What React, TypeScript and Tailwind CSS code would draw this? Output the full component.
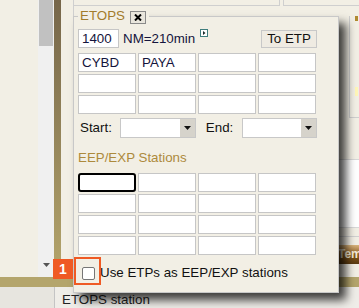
import React from 'react'

function Cell({ text, focus }: { text?: string; focus?: boolean }) {
    return (
        <div
            className={
                focus
                    ? 'h-[19px] bg-white border-2 border-black rounded-[3px]'
                    : 'h-[19px] bg-white border border-[#c6c6c6] pl-[3px] flex items-center text-[#14143c]'
            }
        >
            {text}
        </div>
    )
}

function Select({ className }: { className: string }) {
    return (
        <div className={'flex h-[20px] bg-white border border-[#c8c8c8] ' + className}>
            <div className="flex-1" />
            <div className="w-[15px] bg-[#d6d3cb] flex items-center justify-center">
                <svg width="7" height="4" viewBox="0 0 7 4">
                    <path d="M0 0 H7 L3.5 4 Z" fill="#111" />
                </svg>
            </div>
        </div>
    )
}

export default function App() {
    const grid1 = [
        ['CYBD', 'PAYA', '', ''],
        ['', '', '', ''],
        ['', '', '', ''],
    ]
    const grid2 = [0, 1, 2, 3]

    return (
        <div className="relative w-[359px] h-[308px] overflow-hidden bg-[#f2efe5] font-['Liberation_Sans',Arial,sans-serif] text-[13.33px] leading-[16px] text-[#111]">
            {/* page behind the popup */}
            <div className="flex flex-col h-full">
                <div className="flex h-[280px]">
                    <div className="w-[38px] bg-[#f2efe5]" />
                    <div className="w-[16px] bg-[#f0f0f0] flex flex-col">
                        <div className="h-[46px] mx-[1px] bg-[#c1c1c1]" />
                        <div className="flex-1" />
                        <div className="h-[16px] flex justify-center pt-[2px]">
                            <svg width="7" height="4" viewBox="0 0 7 4">
                                <path d="M0 0 H7 L3.5 4 Z" fill="#555" />
                            </svg>
                        </div>
                    </div>
                    <div className="w-[7px] bg-gradient-to-b from-[#76664a] to-[#b5a66c]" />
                    <div className="flex-1 flex flex-col pl-[12px]">
                        <div className="h-[6px] flex gap-[3px]">
                            <div className="w-[207px] border-x border-b border-[#cfcfcf]" />
                            <div className="flex-1 border-l border-b border-[#cfcfcf]" />
                        </div>
                        <div className="flex-1 flex">
                            <div className="flex-1 border-l border-[#cfcfcf]" />
                            <div className="w-[21px] flex flex-col">
                                <div className="h-[10px]" />
                                <div className="h-[102px] ml-[11px] border-l border-b border-[#cfcfcf] flex flex-col pl-[5px]">
                                    <div className="w-[3px] h-[5px] bg-[#b08a30]" />
                                    <div className="h-[66px]" />
                                    <div className="w-[3px] h-[9px] bg-[#fff6b8]" />
                                </div>
                                <div className="h-[41px]" />
                                <div className="h-[69px] bg-white border-y border-[#d8d8d8]" />
                                <div className="h-[9px] border-b border-[#d0d0d0]" />
                                <div className="h-[8px]" />
                                <div className="h-[19px] bg-gradient-to-b from-[#d9b47c] via-[#8a5c1e] to-[#5a3a10] text-[#f5ecd8] font-bold text-[12px] leading-[19px] overflow-hidden whitespace-nowrap">
                                    Tem
                                </div>
                            </div>
                        </div>
                    </div>
                </div>
                <div className="h-[10px] bg-[#b4a56c]" />
                <div className="flex-1 flex">
                    <div className="w-[55px] bg-[#e7e5df] border-r border-[#c4c4c4]" />
                    <div className="flex-1 bg-[#efede8] pl-[7px] pt-[5px] text-[#222] whitespace-nowrap">ETOPS station</div>
                </div>
            </div>

            {/* ETOPS popup */}
            <div className="absolute left-[73px] top-[16px] w-[266px] h-[277px] border border-[#c8c8c8] bg-[#f2efe5] shadow-[7px_7px_9px_rgba(0,0,0,0.75)] pl-[4px] pr-[21px] flex flex-col">
                <div className="-mt-[9px] self-start h-[16px] flex items-center gap-[5px] bg-[#f2efe5] pl-[2px] pr-[3px]">
                    <span className="text-[#a27c2c]">ETOPS</span>
                    <span className="w-[16px] h-[13px] mt-[3px] border border-[#8a8a8a] bg-[#e9e6dd] flex items-center justify-center">
                        <svg width="8" height="7" viewBox="0 0 8 7">
                            <path d="M1 0.5 L7 6.5 M7 0.5 L1 6.5" stroke="#000" strokeWidth="2" />
                        </svg>
                    </span>
                </div>

                <div className="mt-[5px] h-[19px] flex items-start">
                    <div className="w-[41px] h-[19px] bg-white border border-[#c6c6c6] pl-[3px] flex items-center text-[#14143c]">1400</div>
                    <span className="ml-[4px] self-center text-[#14143c]">NM=210min</span>
                    <svg className="ml-[5px]" width="8" height="8" viewBox="0 0 8 8">
                        <rect x="0.5" y="0.5" width="7" height="7" fill="#fff" stroke="#3f7d7d" />
                        <path d="M3 2 L5.5 4 L3 6 Z" fill="#1a2a2a" />
                    </svg>
                    <div className="ml-auto mt-[1px] w-[56px] h-[18px] border border-[#c8c8c8] bg-[#efebe2] flex items-center justify-center">
                        To ETP
                    </div>
                </div>

                <div className="mt-[5px] grid grid-cols-[repeat(4,58px)] gap-[2px]">
                    {grid1.map((row, r) => row.map((t, c) => <Cell key={r + '-' + c} text={t} />))}
                </div>

                <div className="mt-[4px] h-[20px] flex items-center">
                    <span className="ml-[2px]">Start:</span>
                    <Select className="ml-[8px] w-[76px]" />
                    <span className="ml-[10px]">End:</span>
                    <Select className="ml-auto w-[75px]" />
                </div>

                <div className="mt-[12px] h-[16px] text-[#ad8a3c]">EEP/EXP Stations</div>

                <div className="mt-[7px] grid grid-cols-[repeat(4,58px)] gap-[2px]">
                    {grid2.map((r) => [0, 1, 2, 3].map((c) => <Cell key={r + '-' + c} focus={r === 0 && c === 0} />))}
                </div>

                <div className="mt-[10px] h-[16px] flex items-center whitespace-nowrap">
                    <span className="ml-[4px] w-[13px] h-[13px] rounded-[2px] border border-[#767676] bg-white" />
                    <span className="ml-[5px]">Use ETPs as EEP/EXP stations</span>
                </div>
            </div>

            {/* annotation marker */}
            <div className="absolute left-[74px] top-[257px] w-[27px] h-[28px] border-2 border-[#ef5a24]" />
            <div className="absolute left-[53px] top-[259px] w-[20px] h-[20px] bg-[#ef5a24] text-white font-bold text-[14px] flex items-center justify-center">
                1
            </div>
        </div>
    )
}
